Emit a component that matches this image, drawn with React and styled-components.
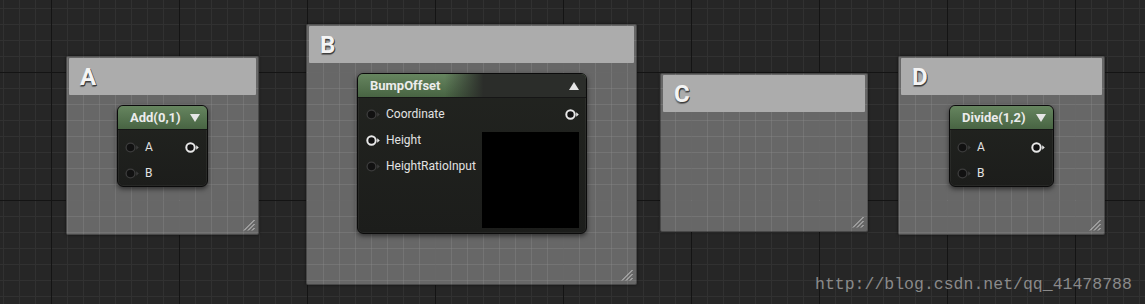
import styled, { createGlobalStyle } from 'styled-components';

const GlobalStyle = createGlobalStyle`
  html, body {
    margin: 0;
    padding: 0;
    background: #262626;
  }
  * {
    box-sizing: border-box;
  }
`;

const Canvas = styled.div`
  position: relative;
  width: 1145px;
  height: 304px;
  overflow: hidden;
  font-family: Roboto, 'Noto Sans', sans-serif;
  background:
    linear-gradient(to right, #141414 1px, transparent 1px) 51px 72px / 128px 128px,
    linear-gradient(to bottom, #141414 1px, transparent 1px) 51px 72px / 128px 128px,
    linear-gradient(to right, #313131 1px, transparent 1px) 3px 8px / 16px 16px,
    linear-gradient(to bottom, #313131 1px, transparent 1px) 3px 8px / 16px 16px,
    #262626;
`;

// comment boxes sit on the free graph canvas; the grid shows through them
const Comment = styled.div`
  position: absolute;
  left: ${(p) => p.$x}px;
  top: ${(p) => p.$y}px;
  width: ${(p) => p.$w}px;
  height: ${(p) => p.$h}px;
  padding: 1px 2px 2px;
  border: 1px solid rgba(0, 0, 0, 0.3);
  border-radius: 2px;
  background:
    linear-gradient(to right, rgba(255, 255, 255, 0.06) 1px, transparent 1px) 3px 8px / 16px 16px fixed,
    linear-gradient(to bottom, rgba(255, 255, 255, 0.06) 1px, transparent 1px) 3px 8px / 16px 16px fixed,
    rgba(156, 156, 156, 0.55);
  box-shadow: 0 0 3px rgba(0, 0, 0, 0.55);
`;

const CommentTitle = styled.div`
  height: 37px;
  display: flex;
  align-items: center;
  padding-left: 11px;
  background: #acacac;
  border-radius: 1px;
  color: #f4f4f4;
  font-size: 24px;
  font-weight: 700;
  text-shadow: 1px 1px 0 #3e3e3e, 0 2px 1px rgba(0, 0, 0, 0.4);
`;

const CommentBody = styled.div`
  padding: 10px 0 0 48px;
`;

const Grip = styled.svg`
  position: absolute;
  right: 3px;
  bottom: 3px;
`;

const Node = styled.div`
  width: ${(p) => p.$w}px;
  background: linear-gradient(#222420, #1c1d1b);
  border: 1px solid #0b0b0b;
  border-radius: 6px;
  box-shadow: 0 2px 5px rgba(0, 0, 0, 0.55), inset 0 0 0 1px rgba(255, 255, 255, 0.05);
  overflow: hidden;
`;

const NodeHeader = styled.div`
  height: 24px;
  display: flex;
  align-items: center;
  justify-content: space-between;
  padding: 0 7px 0 12px;
  border-bottom: 1px solid #161616;
  background: ${(p) =>
    p.$fade
      ? 'linear-gradient(to right, transparent 0, transparent 38%, #2b2d2a 55%), linear-gradient(#66855f, #486443)'
      : 'linear-gradient(#66855f, #486443)'};
  color: #ececec;
  font-size: 13px;
  font-weight: 700;
`;

const Arrow = styled.span`
  width: 0;
  height: 0;
  border-left: 5.5px solid transparent;
  border-right: 5.5px solid transparent;
  ${(p) => (p.$up ? 'border-bottom: 8px solid #e6e6e6;' : 'border-top: 8px solid #e6e6e6;')}
`;

const NodeBody = styled.div`
  display: flex;
  justify-content: space-between;
  padding: ${(p) => p.$pad || '3px 6px 0 8px'};
`;

const Column = styled.div`
  display: flex;
  flex-direction: column;
  align-items: ${(p) => (p.$right ? 'flex-end' : 'flex-start')};
`;

const PinRow = styled.div`
  height: 26px;
  display: flex;
  align-items: center;
  gap: 5px;
  color: #e2e2e2;
  font-size: 12px;
`;

const Preview = styled.div`
  width: 97px;
  height: 96px;
  margin: 5px 1px 5px 0;
  background: #000;
`;

const Watermark = styled.div`
  position: absolute;
  left: 815px;
  top: 276px;
  font-family: 'Liberation Mono', monospace;
  font-size: 16.5px;
  line-height: 17px;
  color: #8a8a8a;
  white-space: nowrap;
`;

const Pin = ({ linked }) => {
  const c = linked ? '#e8e8e8' : '#3c3c3c';
  return (
    <svg width="15" height="11" viewBox="0 0 15 11">
      <circle cx="5.5" cy="5.5" r={linked ? 4.2 : 4.4} fill="#111" stroke={c} strokeWidth={linked ? 2 : 1.3} />
      <path d="M11.2 3.2 L13.8 5.5 L11.2 7.8 Z" fill={c} />
    </svg>
  );
};

const ResizeGrip = () => (
  <Grip width="12" height="12" viewBox="0 0 12 12">
    <path d="M11.5 1 L1 11.5 M11.5 5 L5 11.5 M11.5 9 L9 11.5" stroke="#d2d2d2" strokeWidth="1" />
  </Grip>
);

const MathNode = ({ title, width }) => (
  <Node $w={width}>
    <NodeHeader>
      {title}
      <Arrow />
    </NodeHeader>
    <NodeBody $pad="4px 7px 0 7px">
      <Column>
        <PinRow>
          <Pin />A
        </PinRow>
        <PinRow>
          <Pin />B
        </PinRow>
      </Column>
      <Column $right>
        <PinRow>
          <Pin linked />
        </PinRow>
      </Column>
    </NodeBody>
  </Node>
);

const BumpOffsetNode = () => (
  <Node $w={230}>
    <NodeHeader $fade>
      BumpOffset
      <Arrow $up />
    </NodeHeader>
    <NodeBody>
      <Column>
        <PinRow>
          <Pin />
          Coordinate
        </PinRow>
        <PinRow>
          <Pin linked />
          Height
        </PinRow>
        <PinRow>
          <Pin />
          HeightRatioInput
        </PinRow>
      </Column>
      <Column $right>
        <PinRow>
          <Pin linked />
        </PinRow>
        <Preview />
      </Column>
    </NodeBody>
  </Node>
);

export default function App() {
  return (
    <>
      <GlobalStyle />
      <Canvas>
        <Comment $x={66} $y={56} $w={193} $h={179}>
          <CommentTitle>A</CommentTitle>
          <CommentBody>
            <MathNode title="Add(0,1)" width={91} />
          </CommentBody>
          <ResizeGrip />
        </Comment>

        <Comment $x={306} $y={24} $w={331} $h={261}>
          <CommentTitle>B</CommentTitle>
          <CommentBody>
            <BumpOffsetNode />
          </CommentBody>
          <ResizeGrip />
        </Comment>

        <Comment $x={660} $y={73} $w={208} $h={159}>
          <CommentTitle>C</CommentTitle>
          <ResizeGrip />
        </Comment>

        <Comment $x={898} $y={56} $w={207} $h={179}>
          <CommentTitle>D</CommentTitle>
          <CommentBody>
            <MathNode title="Divide(1,2)" width={105} />
          </CommentBody>
          <ResizeGrip />
        </Comment>

        <Watermark>http://blog.csdn.net/qq_41478788</Watermark>
      </Canvas>
    </>
  );
}
